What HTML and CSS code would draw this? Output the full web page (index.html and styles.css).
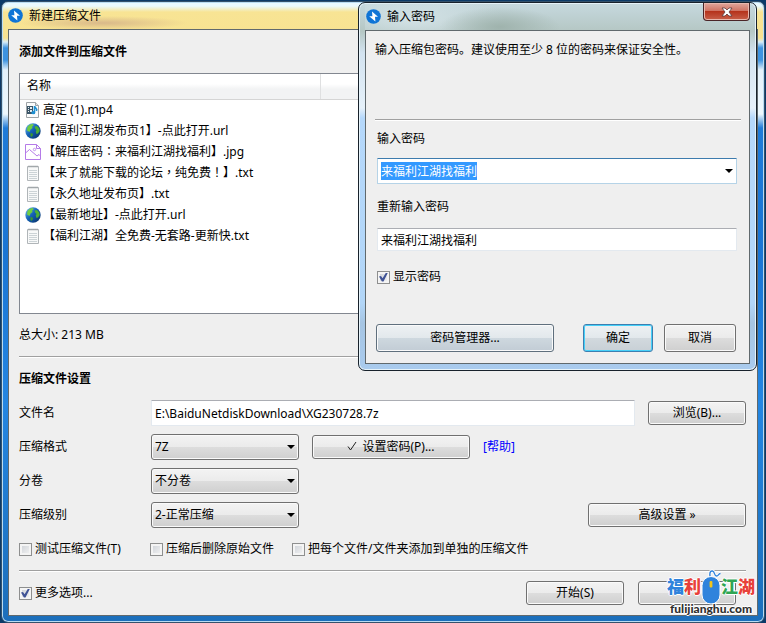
FILE: index.html
```html
<!DOCTYPE html>
<html lang="zh-CN">
<head>
<meta charset="utf-8">
<title>新建压缩文件</title>
<link rel="stylesheet" href="styles.css">
</head>
<body>
<svg class="defs" aria-hidden="true">
  <symbol id="app" viewBox="0 0 15 15">
    <circle cx="7.500" cy="7.500" r="7.300" fill="#0f74d6"/>
    <path d="M6 2.600 12 7.700 9 7.700 9.400 12.600 3.200 7.200 6.400 7.200Z" fill="#fff"/>
  </symbol>
  <symbol id="globe" viewBox="0 0 16 16">
    <circle cx="8" cy="8" r="7.700" fill="url(#sea)"/>
    <path d="M2.500 4C4 1.800 6 .9 8 1l.5 1.500-1.500 1 .5 1.500-2 1.500L4.500 9 2 7.500Z" fill="#6fce42"/>
    <path d="M9.500 3.500 12 3l2.300 2.500.4 2.500-1.700 2.500-1.500.5-.8-2.500.8-1.500-1.500-1.500Z" fill="#4db035"/>
    <path d="M5.500 10 7.500 10.500l.5 1.500-1.500 2-1-1Z" fill="#3b9a2b"/>
  </symbol>
  <linearGradient id="sea" x1="0" y1="0" x2="1" y2="1">
    <stop offset="0" stop-color="#7fc4ee"/><stop offset=".45" stop-color="#1463b8"/><stop offset="1" stop-color="#082c5e"/>
  </linearGradient>
  <symbol id="txt" viewBox="0 0 16 16">
    <path d="M2.500 1.500h11v14h-11z" fill="#f8f9f9" stroke="#b0b5b8"/>
    <path d="M4 .5v2M6 .5v2M8 .5v2M10 .5v2M12 .5v2" stroke="#8d9498" stroke-width=".8"/>
    <path d="M4 5.500h8M4 7.500h8M4 9.500h8M4 11.500h8M4 13.500h8" stroke="#ccd3d6"/>
  </symbol>
  <symbol id="video" viewBox="0 0 16 16">
    <path d="M1.500.5h9l3 3v12h-12z" fill="#fbfcfc" stroke="#9ea4a7"/>
    <path d="M10.500.5v3h3" fill="#dde1e3" stroke="#9ea4a7"/>
    <path d="M2 4h6v8H2z" fill="#3c5668"/>
    <path d="M3 5h1v1H3zM3 7h1v1H3zM3 9h1v1H3zM5 5h2v2H5zM5 8h2v2H5z" fill="#e6eef2"/>
    <path d="M9.500 4v6.500M9.500 4c0 2 3.500 2 2 5" fill="none" stroke="#1d8fd1" stroke-width="1.600"/>
    <ellipse cx="8.300" cy="10.700" rx="2" ry="1.600" fill="#1d8fd1"/>
  </symbol>
  <symbol id="image" viewBox="0 0 16 16">
    <path d="M.5.5h11l4 4v11H.5zM11.500.5v4h4" fill="#fff" stroke="#b57be8"/>
    <path d="m.5 9 4-3.500 7.500 6.500 2-1.500 1.500 1.500" fill="none" stroke="#b57be8"/>
    <circle cx="9.500" cy="5.500" r="1.200" fill="none" stroke="#b57be8" stroke-width=".8"/>
  </symbol>
</svg>

<main class="window">
  <header class="titlebar"><svg class="app-icon"><use href="#app"/></svg><h1>新建压缩文件</h1></header>
  <form class="client">
    <h2>添加文件到压缩文件</h2>
    <div class="files">
      <table>
        <thead><tr><th class="name">名称</th><th></th></tr></thead>
        <tbody>
          <tr><td colspan="2"><div class="file"><svg><use href="#video"/></svg><span>高定 (1).mp4</span></div></td></tr>
          <tr><td colspan="2"><div class="file"><svg><use href="#globe"/></svg><span>【福利江湖发布页1】-点此打开.url</span></div></td></tr>
          <tr><td colspan="2"><div class="file"><svg><use href="#image"/></svg><span>【解压密码<span class="mid" lang="zh-TW">：</span>来福利江湖找福利】.jpg</span></div></td></tr>
          <tr><td colspan="2"><div class="file"><svg><use href="#txt"/></svg><span>【来了就能下载的论坛<span class="mid" lang="zh-TW">，</span>纯免费<span class="mid" lang="zh-TW">！</span>】.txt</span></div></td></tr>
          <tr><td colspan="2"><div class="file"><svg><use href="#txt"/></svg><span>【永久地址发布页】.txt</span></div></td></tr>
          <tr><td colspan="2"><div class="file"><svg><use href="#globe"/></svg><span>【最新地址】-点此打开.url</span></div></td></tr>
          <tr><td colspan="2"><div class="file"><svg><use href="#txt"/></svg><span>【福利江湖】全免费-无套路-更新快.txt</span></div></td></tr>
        </tbody>
      </table>
    </div>
    <p class="total">总大小: 213 MB</p>
    <hr>
    <h2 class="settings-title">压缩文件设置</h2>
    <div class="rows">
      <div class="row">
        <label class="caption" for="file">文件名</label>
        <input class="text grow" id="file" type="text" value="E:\BaiduNetdiskDownload\XG230728.7z">
        <button class="btn" type="button">浏览(B)...</button>
      </div>
      <div class="row">
        <label class="caption" for="format">压缩格式</label>
        <span class="drop"><select id="format"><option>7Z</option></select></span>
        <button class="btn wide" type="button"><svg class="tick" viewBox="0 0 10 10"><path d="M1 5.500 3.500 9 9 1" fill="none" stroke="#222"/></svg>设置密码(P)...</button>
        <a href="#help">[帮助]</a>
      </div>
      <div class="row">
        <label class="caption" for="split">分卷</label>
        <span class="drop"><select id="split"><option>不分卷</option></select></span>
      </div>
      <div class="row">
        <label class="caption" for="level">压缩级别</label>
        <span class="drop"><select id="level"><option>2-正常压缩</option></select></span>
        <button class="btn wide end" type="button">高级设置 »</button>
      </div>
      <div class="row checks">
        <label class="check"><input type="checkbox">测试压缩文件(T)</label>
        <label class="check"><input type="checkbox">压缩后删除原始文件</label>
        <label class="check"><input type="checkbox">把每个文件/文件夹添加到单独的压缩文件</label>
      </div>
    </div>
    <hr>
    <footer class="row actions">
      <label class="check"><input type="checkbox" checked>更多选项...</label>
      <button class="btn end" type="button">开始(S)</button>
      <button class="btn" type="button" aria-label="取消"></button>
    </footer>
  </form>
  <div class="mark">
    <div class="mark-top">
      <span class="blue">福</span><span class="red">利</span>
      <svg class="mouse" viewBox="0 0 20 36" aria-hidden="true">
        <path d="M9.500 9C8 5 9 1.500 11.500 2s1.500 5 4 5 1.500-2.500 4-2.500" fill="none" stroke="#fff" stroke-width="3"/>
        <path d="M9.500 9C8 5 9 1.500 11.500 2s1.500 5 4 5 1.500-2.500 4-2.500" fill="none" stroke="#2f83dc" stroke-width="1.400"/>
        <rect x="1" y="7.500" width="18" height="27.500" rx="9" fill="#2f83dc" stroke="#fff"/>
        <rect x="8.600" y="12" width="2.800" height="6.500" rx="1" fill="#f5c518"/>
      </svg>
      <span class="green">江</span><span class="red">湖</span>
    </div>
    <div class="mark-url">fulijianghu.com</div>
  </div>
</main>

<section class="dialog" role="dialog" aria-labelledby="dialog-title">
  <header class="titlebar">
    <svg class="app-icon"><use href="#app"/></svg><h1 id="dialog-title">输入密码</h1>
    <button class="close" type="button" aria-label="关闭"><svg viewBox="0 0 12 10"><path d="M1 1h3l2 2 2-2h3L8 5l3 4H8L6 7 4 9H1l3-4Z" fill="#fff" stroke="#5a3a3c" stroke-width=".8"/></svg></button>
  </header>
  <form class="client">
    <p class="hint">输入压缩包密码。建议使用至少 8 位的密码来保证安全性。</p>
    <hr>
    <label for="pass">输入密码</label>
    <span class="combo"><input class="text" id="pass" type="text" value="来福利江湖找福利"></span>
    <label for="again">重新输入密码</label>
    <input class="text" id="again" type="text" value="来福利江湖找福利">
    <label class="check"><input type="checkbox" checked>显示密码</label>
    <footer class="dialog-actions">
      <button class="btn manager" type="button">密码管理器...</button>
      <button class="btn default" type="button">确定</button>
      <button class="btn" type="button">取消</button>
    </footer>
  </form>
</section>
<script src="script.js"></script>
</body>
</html>
```

FILE: script.js
```js
const pass = document.getElementById("pass");
pass.focus();
pass.select();
```

FILE: styles.css
```css
* { box-sizing: border-box; }

body {
  margin: 0;
  min-height: 100vh;
  display: flex;
  position: relative;
  background: #0b3a68;
  color: #000;
  font: 12px/16px "Noto Sans", "Noto Sans CJK SC", sans-serif;
  text-spacing-trim: space-all;
}

button, input, select { font: inherit; color: inherit; margin: 0; }
h1, h2, p { margin: 0; font-size: 12px; }
h1 { font-weight: 400; }
.defs { position: absolute; width: 0; height: 0; }

.window {
  flex: 1;
  position: relative;
  display: flex;
  flex-direction: column;
  margin: 1px 1px 0;
  padding: 0 6px 6px;
  border: 1px solid #34516b;
  border-radius: 7px;
  background: linear-gradient(#eafaff 0, #eafaff 4px, #f8e494 10px, #f7e291 36px, #d8edf8 40px, #3d93e0 46px, #3d93e0 58px, #e4f1fa 68px, #eef8fd 112px, #1f7bd8 126px, #1a75d4 250px, #2486e2 400px, #1c6fbb 100%);
  box-shadow: inset 0 0 0 1px #b9dcf2;
}

.titlebar { display: flex; align-items: center; gap: 6px; height: 27px; }
.window > .titlebar {
  background: radial-gradient(85px 7px at 95px 21px, #d9b98a, transparent);
}
.app-icon { width: 15px; height: 15px; flex: none; }

.client {
  flex: 1;
  display: flex;
  flex-direction: column;
  background: #efefef;
  border: 1px solid #60696d;
}
.window > .client { padding: 14px 11px 9px 10px; }

.files {
  height: 241px;
  margin-top: 13px;
  border: 1px solid #828790;
  background: #fff;
}
table { width: 100%; border-collapse: collapse; table-layout: fixed; }
th {
  height: 25px;
  padding: 0 7px;
  text-align: left;
  font-weight: 400;
  background: linear-gradient(#fff 40%, #f2f3f4 60%);
  border-bottom: 1px solid #d5d5d5;
}
.name { width: 300px; border-right: 1px solid #dfe0e1; }
td { height: 21px; padding: 0 5px; }
.file { display: flex; align-items: center; gap: 2px; }
.file svg { width: 16px; height: 16px; flex: none; }
.mid { font-family: "Noto Sans CJK TC", sans-serif; line-height: 1px; }

.total { margin-top: 13px; }
hr {
  width: 100%;
  height: 2px;
  margin: 0;
  border: 0;
  border-top: 1px solid #a0a0a0;
  border-bottom: 1px solid #fff;
}
.total + hr { margin-top: 13px; }
.settings-title { margin-top: 13px; }

.rows { display: flex; flex-direction: column; gap: 8px; margin: 13px 0 8px; }
.row { display: flex; align-items: center; gap: 13px; height: 26px; }
.caption { width: 119px; }
.grow { flex: 1; }
.end { margin-left: auto; }

.text {
  min-width: 0;
  height: 26px;
  padding: 0 3px;
  border: 1px solid #e3e9ef;
  border-top-color: #abadb3;
  border-radius: 1px;
  background: #fff;
  outline: 0;
}

.btn {
  width: 98px;
  height: 24px;
  padding: 0;
  border: 1px solid #707070;
  border-radius: 3px;
  background: linear-gradient(#f3f3f3, #ebebeb 50%, #dddddd 50%, #cfcfcf);
  box-shadow: inset 0 0 0 1px #fafafa;
}
.wide { width: 158px; }
.tick { width: 10px; height: 10px; margin-right: 5px; }

.drop, .combo { position: relative; display: flex; }
select {
  appearance: none;
  width: 148px;
  height: 26px;
  padding: 0 3px;
  border: 1px solid #707070;
  border-radius: 3px;
  background: linear-gradient(#f3f3f3, #ebebeb 50%, #dddddd 50%, #cfcfcf);
  box-shadow: inset 0 0 0 1px #fafafa;
}
.drop::after, .combo::after {
  content: "";
  position: absolute;
  right: 4px;
  top: 11px;
  width: 8px;
  height: 4px;
  background: #000;
  clip-path: polygon(0 0, 100% 0, 50% 100%);
}

a { color: #00f; text-decoration: none; }

.check { display: flex; align-items: center; gap: 3px; }
.check input {
  appearance: none;
  width: 13px;
  height: 13px;
  border: 1px solid #8e8f8f;
  background: linear-gradient(135deg, #cbcfd5, #f6f6f6);
  box-shadow: inset 0 0 0 2px #f4f4f4;
}
.check input:checked::before {
  content: "";
  display: block;
  width: 9px;
  height: 9px;
  margin: 1px;
  background: #3f5295;
  clip-path: polygon(0 45%, 22% 40%, 40% 65%, 78% 0, 100% 0, 50% 100%, 32% 100%);
}
.checks { gap: 0; }
.checks .check:nth-child(1) { width: 131px; }
.checks .check:nth-child(2) { width: 142px; }
.actions { margin-top: 8px; padding-right: 10px; gap: 14px; }

.mark {
  position: absolute;
  right: 7px;
  bottom: 8px;
  width: 92px;
  text-shadow: 1px 0 #fff, -1px 0 #fff, 0 1px #fff, 0 -1px #fff;
}
.mark-top {
  display: flex;
  align-items: center;
  justify-content: center;
  height: 34px;
  font-size: 17px;
  line-height: 20px;
  font-weight: 900;
}
.mouse { width: 20px; height: 36px; flex: none; overflow: visible; }
.blue { color: #2f83dc; }
.red { color: #e8413a; }
.green { color: #2fa653; }
.mark-url {
  color: #303030;
  font: 900 12px/10px Lato, sans-serif;
  text-align: center;
}

.dialog {
  position: absolute;
  top: 2px;
  right: 9px;
  width: 399px;
  display: flex;
  flex-direction: column;
  padding: 0 6px 6px;
  border: 1px solid #18222c;
  border-radius: 7px;
  background: linear-gradient(#c6d9df, #b5c7c4 28px, #d3e3f0 50px, #e6f1fa 105px, #b5d8fb 115px, #b2d6f8 300px, #a6c5e3 320px, #a9cbee);
  box-shadow: inset 0 0 0 1px #e6f3fa;
}
.dialog .titlebar {
  height: 27px;
  padding-left: 1px;
  background: radial-gradient(60px 20px at 135px 24px, #9fb3ad, transparent), radial-gradient(90px 26px at 50px 16px, #d3e2e6, transparent);
}
.dialog > .client { padding: 11px 8px 11px 9px; }
.close {
  align-self: flex-start;
  display: grid;
  place-items: center;
  width: 47px;
  height: 18px;
  margin-left: auto;
  padding: 0;
  border: 1px solid #4a2426;
  border-top: 0;
  border-radius: 0 0 4px 4px;
  background: linear-gradient(#e0a79c, #cf7464 45%, #b5331c 50%, #c8604a);
  box-shadow: inset 0 0 0 1px #e8b8ae;
}
.close svg { width: 12px; height: 10px; }
.hint { min-height: 77px; }
.dialog hr { margin-bottom: 10px; }
.dialog .client > label { margin-left: 2px; }
.combo { margin: 11px 4px 15px 2px; }
.combo .text {
  flex: 1;
  border-color: #b5d3e7;
  border-top-color: #3d7bad;
}
.dialog .client > .text { height: 23px; margin: 13px 4px 18px 2px; }
::selection { background: #3399ff; color: #fff; }
.dialog-actions { display: flex; gap: 11px; margin: 39px 5px 0 1px; }
.dialog-actions .btn { width: 72px; height: 28px; }
.dialog-actions .manager {
  width: 178px;
  margin-right: auto;
  border-color: #5f6f7d;
  background: linear-gradient(#eef1f3, #e2e8ec 50%, #ced8df 50%, #c2ccd5);
}
.dialog-actions .default {
  width: 70px;
  border-color: #3c7fb1;
  box-shadow: inset 0 0 0 1px #46d0f8;
  background: linear-gradient(#eef1f3, #e2e8ec 50%, #d2d9de 50%, #c8d0d6);
}
```
